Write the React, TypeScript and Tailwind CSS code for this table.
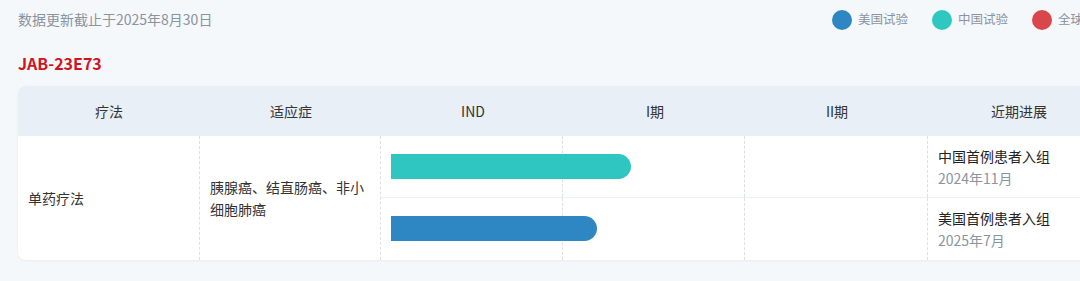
import React from "react";

const font = { fontFamily: '"Noto Sans CJK SC", "Noto Sans", sans-serif' };

const legend = [
  { label: "美国试验", color: "bg-[#2e87c2]" },
  { label: "中国试验", color: "bg-[#2ec8c1]" },
  { label: "全球试验", color: "bg-[#d9474a]" },
];

const rows = [
  { bar: "bg-[#2fc6c1]", width: 240, title: "中国首例患者入组", date: "2024年11月" },
  { bar: "bg-[#2e87c2]", width: 206, title: "美国首例患者入组", date: "2025年7月" },
];

const App = () => {
  return (
    <div
      className="w-[1080px] h-[281px] overflow-hidden bg-[#f5f8fb] text-[#333]"
      style={font}
    >
      <div className="w-[1090px] ml-[18px]">
        {/* ----- top bar */}
        <div className="h-[39px] flex items-center justify-between">
          <span className="text-[14px] text-[#8a939e]">数据更新截止于2025年8月30日</span>
          <div className="flex items-center gap-6">
            {legend.map((l) => (
              <div key={l.label} className="flex items-center gap-[6px]">
                <span className={`w-5 h-5 rounded-full ${l.color}`} />
                <span className="text-[12.5px] text-[#8a939e]">{l.label}</span>
              </div>
            ))}
          </div>
        </div>

        <div className="mt-[13px] h-[22px] leading-[22px] text-[16px] font-bold text-[#d4111e]">
          JAB-23E73
        </div>

        {/* ----- table */}
        <div className="mt-[12px] w-[1092px] rounded-lg overflow-hidden bg-white shadow-[0_1px_3px_rgba(0,0,0,0.05)]">
          <div className="grid grid-cols-[182px_182px_182px_182px_182px_182px] h-[50px] bg-[#e8eff7] text-[14px] text-[#333]">
            {["疗法", "适应症", "IND", "I期", "II期", "近期进展"].map((h) => (
              <div key={h} className="flex items-center justify-center">
                {h}
              </div>
            ))}
          </div>

          <div className="grid grid-cols-[182px_181px_547px_182px] grid-rows-[62px_62px] text-[14px]">
            <div className="row-span-2 flex items-center px-[10px] border-r border-dashed border-[#dcdfe4]">
              单药疗法
            </div>
            <div className="row-span-2 flex items-center px-[10px] leading-[22px] border-r border-dashed border-[#dcdfe4]">
              胰腺癌、结直肠癌、非小细胞肺癌
            </div>
            {rows.map((r, i) => (
              <React.Fragment key={r.title}>
                <div
                  className={`relative grid grid-cols-[182px_182px_183px] ${i === 0 ? "border-b border-[#edf0f3]" : ""}`}
                >
                  <div className="border-r border-dashed border-[#dcdfe4]" />
                  <div className="border-r border-dashed border-[#dcdfe4]" />
                  <div className="border-r border-dashed border-[#dcdfe4]" />
                  <div
                    className={`absolute left-[10px] top-[18px] h-[25px] rounded-r-[13px] ${r.bar}`}
                    style={{ width: r.width }}
                  />
                </div>
                <div
                  className={`flex flex-col justify-center px-[10px] leading-[22px] ${i === 0 ? "border-b border-[#edf0f3]" : ""}`}
                >
                  <span className="text-[#222]">{r.title}</span>
                  <span className="text-[#8a939e]">{r.date}</span>
                </div>
              </React.Fragment>
            ))}
          </div>
        </div>
      </div>
    </div>
  );
};

export default App;
